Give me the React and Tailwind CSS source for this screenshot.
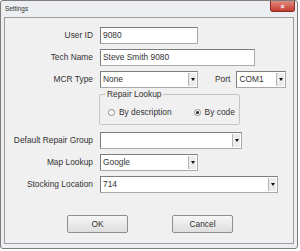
import React from "react";

function Field({ w, children }) {
  return (
    <div
      className={`h-[17px] bg-white border border-[#a9a9a9] border-t-[#7d7d7d] border-l-[#7d7d7d] flex items-center pl-[2px] whitespace-nowrap ${w}`}
    >
      {children}
    </div>
  );
}

function Combo({ w, children }) {
  return (
    <div
      className={`h-[17px] bg-white border border-[#a9a9a9] border-t-[#7d7d7d] border-l-[#7d7d7d] flex items-stretch whitespace-nowrap ${w}`}
    >
      <div className="flex-1 flex items-center pl-[2px]">{children}</div>
      <div className="w-[8px] m-[1px] bg-[#ececec] border-l border-[#b5b5b5] flex items-center justify-center">
        <svg width="4" height="3" viewBox="0 0 4 3">
          <polygon points="0,0 4,0 2,3" fill="#111" />
        </svg>
      </div>
    </div>
  );
}

function Row({ label, children, className = "" }) {
  return (
    <div className={`flex items-center ${className}`}>
      <div className="w-[89px] text-right pr-[1px] whitespace-nowrap">{label}</div>
      <div className="ml-[6px] flex items-center">{children}</div>
    </div>
  );
}

function Radio({ checked, label }) {
  return (
    <div className="flex items-center gap-[4px] whitespace-nowrap">
      <div className="w-[7px] h-[7px] shrink-0 rounded-full border border-[#8a8a8a] bg-white flex items-center justify-center">
        {checked && <div className="w-[3px] h-[3px] rounded-full bg-[#222]" />}
      </div>
      <span>{label}</span>
    </div>
  );
}

function Btn({ children }) {
  return (
    <div className="w-[61px] h-[18px] border border-[#8e8e8e] rounded-[2px] bg-gradient-to-b from-[#f6f6f6] to-[#dedede] flex items-center justify-center">
      {children}
    </div>
  );
}

export default function App() {
  return (
    <div className="w-[300px] h-[251px] bg-white font-['Liberation_Sans',Arial,sans-serif] text-[8.4px] text-[#333] leading-none">
      <div className="w-[298px] h-[249px] border border-[#7c7c7c] rounded-[3px] bg-[#eceef1] flex flex-col">
        <div className="h-[16px] flex justify-between">
          <span className="text-[6.4px] text-[#333] pl-[4px] pt-[5px]">Settings</span>
          <div className="w-[25px] h-[11px] mr-[2px] rounded-b-[3px] border border-[#8b2a22] border-t-0 bg-gradient-to-b from-[#e08a80] to-[#c4382c] flex items-center justify-center">
            <span className="text-white text-[7px] font-bold">×</span>
          </div>
        </div>
        <div className="ml-[3px] mr-[3px] h-[227px] border border-[#9c9c9c] bg-[#f0f0f0] flex flex-col pt-[9px]">
          <div className="flex flex-col gap-[5px]">
            <Row label="User ID">
              <Field w="w-[98px]">9080</Field>
            </Row>
            <Row label="Tech Name">
              <Field w="w-[155px]">Steve Smith 9080</Field>
            </Row>
            <Row label="MCR Type">
              <Combo w="w-[98px]">None</Combo>
              <span className="ml-[17px]">Port</span>
              <Combo w="w-[50px] ml-[6px]">COM1</Combo>
            </Row>
          </div>
          <fieldset className="ml-[94px] mt-[2px] w-[141px] h-[35px] border border-[#c4c4c4] rounded-[2px] px-[4px] min-w-0">
            <legend className="px-[2px] ml-[1px] whitespace-nowrap">Repair Lookup</legend>
            <div className="flex items-center pl-[4px] pt-[10px]">
              <Radio label="By description" />
              <div className="ml-[22px]">
                <Radio checked label="By code" />
              </div>
            </div>
          </fieldset>
          <div className="flex flex-col gap-[5px] mt-[7px]">
            <Row label="Default Repair Group">
              <Combo w="w-[142px]"></Combo>
            </Row>
            <Row label="Map Lookup">
              <Combo w="w-[98px]">Google</Combo>
            </Row>
            <Row label="Stocking Location">
              <Combo w="w-[178px]">714</Combo>
            </Row>
          </div>
          <div className="flex mt-[22px] pl-[62px] gap-[44px]">
            <Btn>OK</Btn>
            <Btn>Cancel</Btn>
          </div>
        </div>
      </div>
    </div>
  );
}
